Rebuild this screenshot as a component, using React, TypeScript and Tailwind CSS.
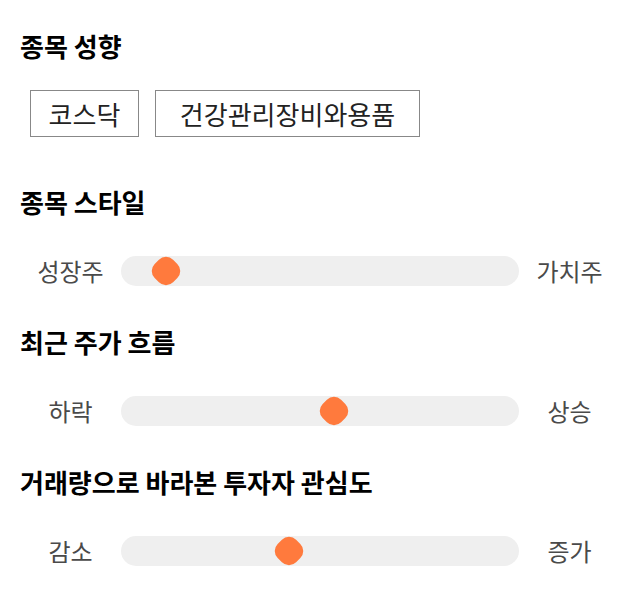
const FONT = { fontFamily: '"Noto Sans CJK KR", "Noto Sans", sans-serif' };

type Scale = { title: string; left: string; right: string; value: number };

const scales: Scale[] = [
  { title: '종목 스타일', left: '성장주', right: '가치주', value: 11.2 },
  { title: '최근 주가 흐름', left: '하락', right: '상승', value: 53.6 },
  { title: '거래량으로 바라본 투자자 관심도', left: '감소', right: '증가', value: 42.2 },
];

function SliderRow({ left, right, value }: { left: string; right: string; value: number }) {
  return (
    <div className="flex h-[30px] items-center">
      <span className="w-[101px] text-center text-[24px] text-[#4a4a4a]">{left}</span>
      <div className="relative h-[30px] flex-1 rounded-full bg-[#efefef]">
        <div
          className="absolute top-1/2 h-[26px] w-[26px] -translate-x-1/2 -translate-y-1/2 rotate-45 rounded-[10px] bg-[#ff7a3d]"
          style={{ left: `${value}%` }}
        />
      </div>
      <span className="w-[101px] text-center text-[24px] text-[#4a4a4a]">{right}</span>
    </div>
  );
}

export default function App() {
  return (
    <div className="min-h-[606px] bg-white px-5 pt-[31px]" style={FONT}>
      <h2 className="text-[26px] font-bold leading-[30px] text-black">종목 성향</h2>
      <div className="mt-[29px] flex gap-4 pl-[10px]">
        <div className="flex h-[47px] w-[109px] items-center justify-center border border-[#888] text-[26px] text-[#222]">
          코스닥
        </div>
        <div className="flex h-[47px] w-[265px] items-center justify-center border border-[#888] text-[26px] text-[#222]">
          건강관리장비와용품
        </div>
      </div>

      {scales.map((s, i) => (
        <section key={s.title} className={i === 0 ? 'mt-[50px]' : 'mt-[41px]'}>
          <h2 className="text-[26px] font-bold leading-[30px] text-black">{s.title}</h2>
          <div className="mt-[39px]">
            <SliderRow left={s.left} right={s.right} value={s.value} />
          </div>
        </section>
      ))}
    </div>
  );
}
